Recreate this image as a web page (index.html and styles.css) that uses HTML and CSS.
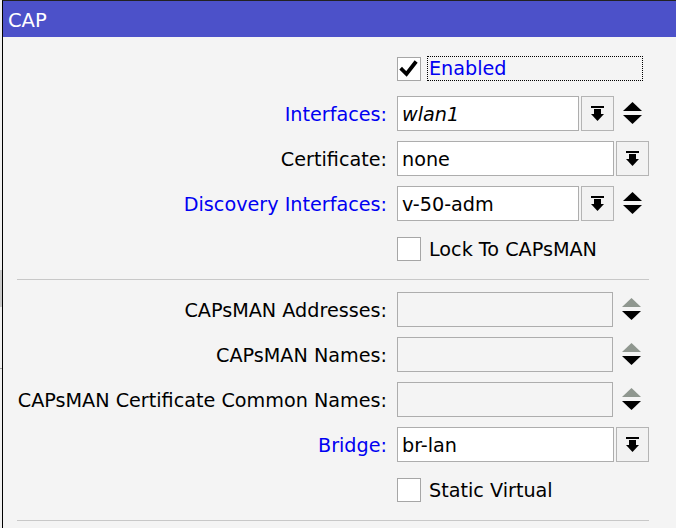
FILE: index.html
```html
<!DOCTYPE html>
<html>
<head>
<meta charset="utf-8">
<link rel="stylesheet" href="styles.css">
</head>
<body>
<div class="screen">
  <div class="edge">
    <div class="edge-gap1"></div>
    <div class="edge-block"></div>
    <div class="edge-gap2"></div>
    <div class="edge-line"></div>
  </div>
  <div class="window">
    <div class="titlebar">CAP</div>
    <div class="content">
      <div class="row">
        <div class="label"></div>
        <div class="field">
          <span class="check">
            <svg width="22" height="22" viewBox="0 0 22 22"><polyline points="4,11.5 8.5,16 17,5" fill="none" stroke="#000" stroke-width="3.8" stroke-linecap="square"/></svg>
          </span>
          <span class="focus blue">Enabled</span>
        </div>
      </div>
      <div class="row">
        <div class="label blue">Interfaces:</div>
        <div class="field">
          <div class="input narrow italic">wlan1</div>
          <div class="btn"><svg class="dd" width="13" height="18" viewBox="0 0 13 18"><rect x="0" y="0" width="13" height="2"/><rect x="3" y="3" width="7" height="5"/><polygon points="0,8 13,8 6.5,15"/></svg></div>
          <span class="updown"><svg width="19" height="23" viewBox="0 0 19 23"><polygon points="0,9 9.5,0 19,9"/><polygon points="0,13 19,13 9.5,22"/></svg></span>
        </div>
      </div>
      <div class="row">
        <div class="label">Certificate:</div>
        <div class="field">
          <div class="input full">none</div>
          <div class="btn"><svg class="dd" width="13" height="18" viewBox="0 0 13 18"><rect x="0" y="0" width="13" height="2"/><rect x="3" y="3" width="7" height="5"/><polygon points="0,8 13,8 6.5,15"/></svg></div>
        </div>
      </div>
      <div class="row">
        <div class="label blue">Discovery Interfaces:</div>
        <div class="field">
          <div class="input narrow">v-50-adm</div>
          <div class="btn"><svg class="dd" width="13" height="18" viewBox="0 0 13 18"><rect x="0" y="0" width="13" height="2"/><rect x="3" y="3" width="7" height="5"/><polygon points="0,8 13,8 6.5,15"/></svg></div>
          <span class="updown"><svg width="19" height="23" viewBox="0 0 19 23"><polygon points="0,9 9.5,0 19,9"/><polygon points="0,13 19,13 9.5,22"/></svg></span>
        </div>
      </div>
      <div class="row">
        <div class="label"></div>
        <div class="field">
          <span class="check"></span>
          <span class="check-text">Lock To CAPsMAN</span>
        </div>
      </div>
      <div class="sep"></div>
      <div class="row">
        <div class="label">CAPsMAN Addresses:</div>
        <div class="field">
          <div class="input disabled"></div>
          <span class="updown"><svg width="19" height="23" viewBox="0 0 19 23"><polygon class="grey" points="0,9 9.5,0 19,9"/><polygon points="0,13 19,13 9.5,22"/></svg></span>
        </div>
      </div>
      <div class="row">
        <div class="label">CAPsMAN Names:</div>
        <div class="field">
          <div class="input disabled"></div>
          <span class="updown"><svg width="19" height="23" viewBox="0 0 19 23"><polygon class="grey" points="0,9 9.5,0 19,9"/><polygon points="0,13 19,13 9.5,22"/></svg></span>
        </div>
      </div>
      <div class="row">
        <div class="label">CAPsMAN Certificate Common Names:</div>
        <div class="field">
          <div class="input disabled"></div>
          <span class="updown"><svg width="19" height="23" viewBox="0 0 19 23"><polygon class="grey" points="0,9 9.5,0 19,9"/><polygon points="0,13 19,13 9.5,22"/></svg></span>
        </div>
      </div>
      <div class="row">
        <div class="label blue">Bridge:</div>
        <div class="field">
          <div class="input full">br-lan</div>
          <div class="btn"><svg class="dd" width="13" height="18" viewBox="0 0 13 18"><rect x="0" y="0" width="13" height="2"/><rect x="3" y="3" width="7" height="5"/><polygon points="0,8 13,8 6.5,15"/></svg></div>
        </div>
      </div>
      <div class="row">
        <div class="label"></div>
        <div class="field">
          <span class="check"></span>
          <span class="check-text">Static Virtual</span>
        </div>
      </div>
      <div class="sep"></div>
    </div>
  </div>
</div>
</body>
</html>
```

FILE: styles.css
```css
html, body {
  margin: 0;
  padding: 0;
  background: #f4f4f4;
}
body {
  width: 676px;
  height: 528px;
  overflow: hidden;
  font-family: "DejaVu Sans", Verdana, sans-serif;
  font-size: 19.2px;
  color: #000;
}
.screen {
  display: flex;
  height: 528px;
}
.edge {
  width: 2px;
  flex: none;
  background: #f0f0f0;
  display: flex;
  flex-direction: column;
}
.edge-gap1 { height: 270px; }
.edge-block { height: 37px; background: #c8c8c8; }
.edge-gap2 { height: 61px; }
.edge-line { height: 1px; background: #a0a0a0; }
.window {
  flex: 1;
  border-left: 1px solid #000;
  border-top: 1px solid #222;
  background: #f4f4f4;
}
.titlebar {
  height: 36px;
  background: #4c51c9;
  color: #fff;
  line-height: 40px;
  padding-left: 5px;
  font-size: 19.5px;
}
.content {
  padding-top: 9px;
}
.row {
  display: grid;
  grid-template-columns: 384px 1fr;
  column-gap: 10px;
  height: 45px;
  align-items: center;
}
.label {
  text-align: right;
  white-space: nowrap;
  padding-top: 2px;
}
.blue { color: #0000f2; }
.field {
  display: flex;
  align-items: center;
  gap: 2px;
}
.check {
  width: 24px;
  height: 24px;
  box-sizing: border-box;
  border: 1px solid #a6a6a6;
  background: #fff;
  display: flex;
  align-items: center;
  justify-content: center;
  flex: none;
}
.focus {
  margin-left: 4px;
  width: 216px;
  height: 25px;
  box-sizing: border-box;
  border: 1px dotted #000;
  line-height: 24px;
  padding-left: 1px;
}
.check-text {
  margin-left: 6px;
  padding-top: 2px;
}
.input {
  height: 35px;
  box-sizing: border-box;
  border: 1px solid #adadad;
  background: #fff;
  line-height: 35px;
  padding-left: 4px;
  white-space: nowrap;
}
.narrow { width: 182px; }
.full { width: 217px; }
.disabled { width: 216px; background: #f4f4f4; }
.italic { font-style: italic; }
.btn {
  width: 33px;
  height: 35px;
  box-sizing: border-box;
  border: 1px solid #b4b4b4;
  background: #f2f2f2;
  display: flex;
  align-items: center;
  justify-content: center;
}
.dd { fill: #000; margin-top: 3px; }
.updown {
  width: 36px;
  display: flex;
  justify-content: center;
  margin-left: -2px;
}
.updown svg { fill: #000; }
.updown .grey { fill: #8f978f; }
.sep {
  height: 1px;
  width: 632px;
  background: #c8c8c8;
  margin: 8px 0 7px 14px;
}
```
